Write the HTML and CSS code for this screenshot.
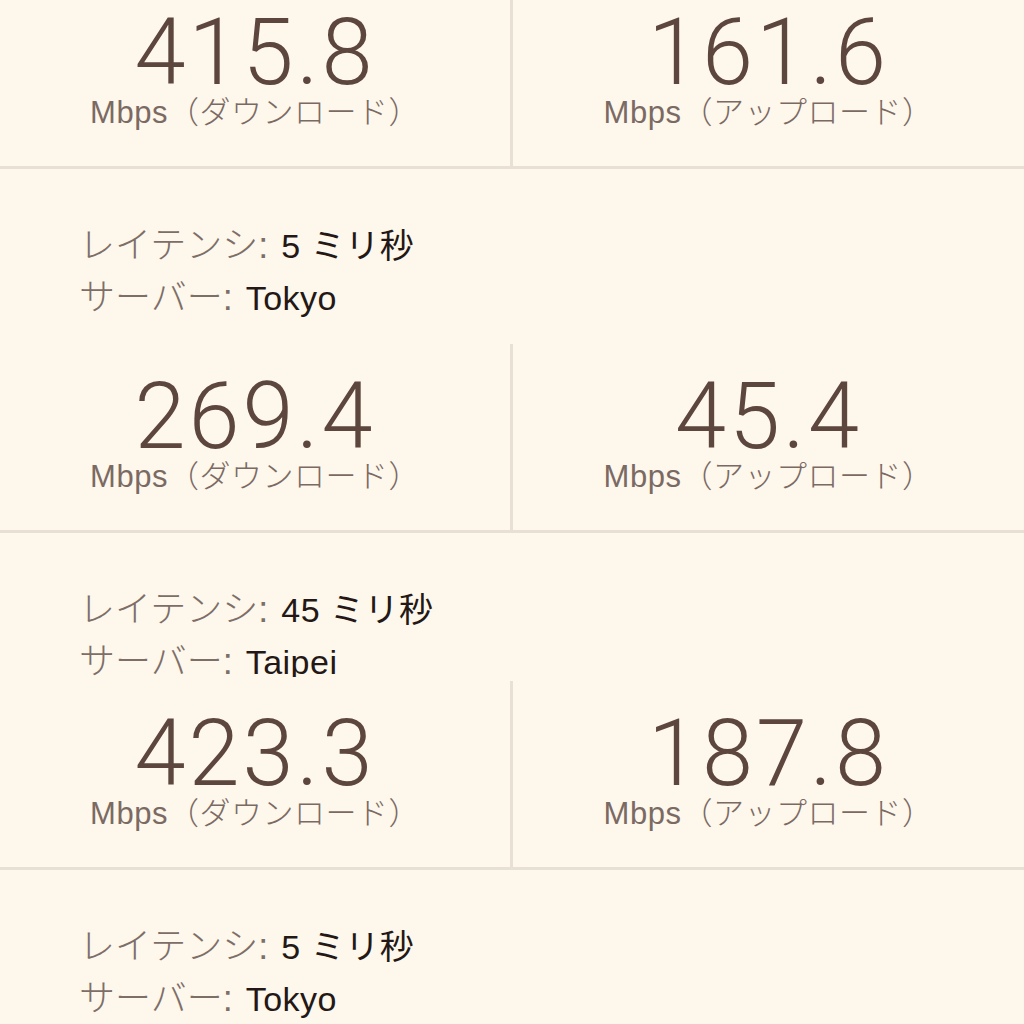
FILE: index.html
```html
<!DOCTYPE html>
<html lang="ja">
    <head>
        <meta charset="utf-8"/>
        <title>スピードテスト結果</title>
        <link rel="stylesheet" href="styles.css">
    </head>
    <body>
        <div class="page">
            <div class="result">
                <div class="cell">
                    <div class="num">415.8</div>
                    <div class="unit">Mbps（ダウンロード）</div>
                </div>
                <div class="sep"></div>
                <div class="cell">
                    <div class="num">161.6</div>
                    <div class="unit">Mbps（アップロード）</div>
                </div>
            </div>
            <div class="info">
                <div class="row"><span class="key">レイテンシ:</span><span class="val">5 ミリ秒</span></div>
                <div class="row"><span class="key">サーバー:</span><span class="val">Tokyo</span></div>
            </div>

            <div class="result">
                <div class="cell">
                    <div class="num">269.4</div>
                    <div class="unit">Mbps（ダウンロード）</div>
                </div>
                <div class="sep"></div>
                <div class="cell">
                    <div class="num">45.4</div>
                    <div class="unit">Mbps（アップロード）</div>
                </div>
            </div>
            <div class="info cut">
                <div class="row"><span class="key">レイテンシ:</span><span class="val">45 ミリ秒</span></div>
                <div class="row"><span class="key">サーバー:</span><span class="val">Taipei</span></div>
            </div>

            <div class="result">
                <div class="cell">
                    <div class="num">423.3</div>
                    <div class="unit">Mbps（ダウンロード）</div>
                </div>
                <div class="sep"></div>
                <div class="cell">
                    <div class="num">187.8</div>
                    <div class="unit">Mbps（アップロード）</div>
                </div>
            </div>
            <div class="info">
                <div class="row"><span class="key">レイテンシ:</span><span class="val">5 ミリ秒</span></div>
                <div class="row"><span class="key">サーバー:</span><span class="val">Tokyo</span></div>
            </div>
        </div>
    </body>
</html>
```

FILE: styles.css
```css
html, body {
    background: #fef7ec;
    margin: 0px;
    padding: 0px;
}

body {
    font-family: "Liberation Sans", "Noto Sans CJK JP", sans-serif;
    height: 1024px;
    overflow: hidden;
}

/* screenshot starts a bit below the top of the first card */
.page { margin-top: -20px; }

.result {
    border-bottom: 3px solid #e8e0d5;
    display: grid;
    grid-template-columns: 510px 3px 1fr;
    height: 186px;
}

.sep { background: #e8e0d5; }

.cell {
    padding-top: 28px;
    text-align: center;
}

.num {
    color: #5c463d;
    font-family: Roboto, "Liberation Sans", sans-serif;
    font-size: 92px;
    font-weight: 300;
    letter-spacing: 3px;
    line-height: 90px;
}

.unit {
    color: #7b6a63;
    font-size: 31px;
    font-weight: 300;
    letter-spacing: 0.5px;
    line-height: 30px;
}

.info {
    height: 124px;
    padding: 51px 0px 0px 79px;
}

.info.cut {
    height: 93px;
    margin-bottom: 4px;
    overflow: hidden;
}

.row {
    font-size: 34px;
    line-height: 52px;
    white-space: nowrap;
}

.key {
    color: #7d6e68;
    font-size: 36px;
    font-weight: 300;
    margin-right: 13px;
}

.val {
    color: #231815;
    letter-spacing: 0.5px;
}
```
